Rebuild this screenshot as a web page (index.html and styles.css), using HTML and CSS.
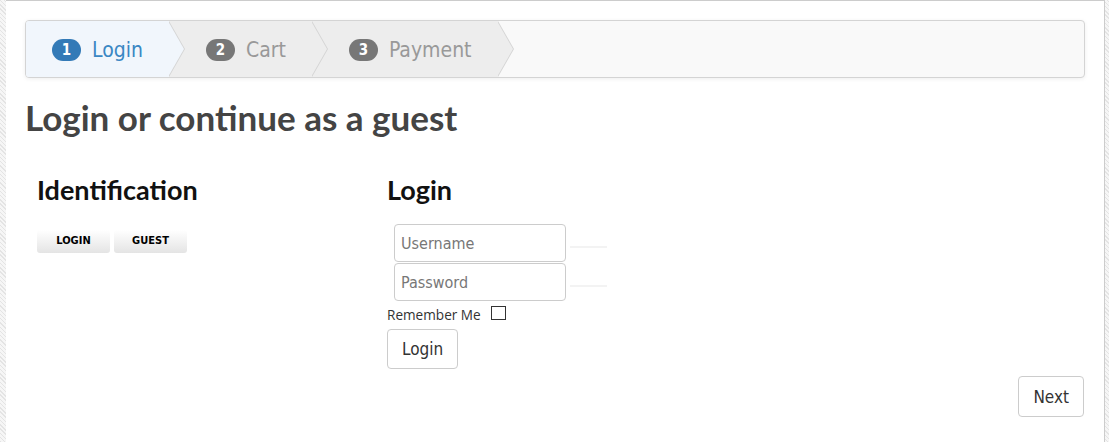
FILE: index.html
```html
<!DOCTYPE html>
<html lang="en">
<head>
    <meta charset="UTF-8">
    <meta name="viewport" content="width=device-width, initial-scale=1.0">
    <title>Checkout</title>
    <link rel="stylesheet" href="styles.css">
</head>
<body>
    <div class="page">
        <div class="wizard">
            <ul class="steps">
                <li class="step active"><span class="badge">1</span>Login<span class="chevron"></span></li>
                <li class="step"><span class="badge">2</span>Cart<span class="chevron"></span></li>
                <li class="step"><span class="badge">3</span>Payment<span class="chevron"></span></li>
            </ul>
        </div>

        <h1 class="title">Login or continue as a guest</h1>

        <div class="row">
            <div class="col col-ident">
                <h2>Identification</h2>
                <div class="choice">
                    <button type="button" class="choice-btn">LOGIN</button>
                    <button type="button" class="choice-btn">GUEST</button>
                </div>
            </div>
            <div class="col col-login">
                <h2>Login</h2>
                <form class="login-form">
                    <div class="field">
                        <input type="text" id="username" placeholder="Username">
                        <span class="hint-line"></span>
                    </div>
                    <div class="field">
                        <input type="password" id="password" placeholder="Password">
                        <span class="hint-line"></span>
                    </div>
                    <label class="remember" for="remember">Remember Me <input type="checkbox" id="remember"></label>
                    <button type="button" class="btn btn-login">Login</button>
                </form>
            </div>
        </div>

        <div class="actions">
            <button type="button" class="btn btn-next">Next</button>
        </div>
    </div>
</body>
</html>
```

FILE: styles.css
```css
body {
    margin: 0;
    background: repeating-linear-gradient(45deg, #e4e4e4 0 1px, #f6f6f6 1px 3px);
    font-family: "DejaVu Sans Condensed", "DejaVu Sans", sans-serif;
    color: #333;
}
.page {
    margin: 0 4px 0 6px;
    min-height: 100vh;
    box-sizing: border-box;
    background-color: #fff;
    border-top: 1px solid #ccc;
    border-right: 1px solid #ccc;
    padding: 19px 19px 20px 19px;
}

/* wizard bar */
.wizard {
    border: 1px solid #d4d4d4;
    border-radius: 4px;
    background-color: #f9f9f9;
    box-shadow: 0 1px 4px rgba(0, 0, 0, 0.065);
    overflow: hidden;
}
.steps {
    list-style: none;
    margin: 0;
    padding: 0;
    height: 56px;
    display: flex;
}
.step {
    position: relative;
    display: flex;
    align-items: center;
    padding: 1px 26px 0 37px;
    background-color: #ededed;
    color: #999;
    font-size: 21px;
}
.step.active {
    padding-left: 26px;
    background-color: #f1f6fc;
    color: #3a87c3;
}
.badge {
    display: inline-flex;
    align-items: center;
    justify-content: center;
    width: 29px;
    height: 22px;
    margin-right: 11px;
    border-radius: 11px;
    background-color: #777;
    color: #fff;
    font-size: 15px;
    font-weight: bold;
}
.step.active .badge {
    background-color: #337ab7;
}
.chevron {
    position: absolute;
    top: 0;
    right: -16px;
    z-index: 1;
    width: 0;
    height: 0;
    border-top: 28px solid transparent;
    border-bottom: 28px solid transparent;
    border-left: 16px solid #d4d4d4;
}
.chevron::after {
    content: "";
    position: absolute;
    top: -28px;
    left: -17px;
    border-top: 28px solid transparent;
    border-bottom: 28px solid transparent;
    border-left: 16px solid #ededed;
}
.step.active .chevron::after {
    border-left-color: #f1f6fc;
}

/* headings */
.title {
    margin: 18px 0 0 0;
    font-family: Lato, sans-serif;
    font-size: 35px;
    font-weight: bold;
    line-height: 1.2;
    color: #444;
}
.row {
    display: grid;
    grid-template-columns: 362px 1fr;
    margin-top: 36px;
}
.col h2 {
    margin: 0;
    font-family: Lato, sans-serif;
    font-size: 27px;
    font-weight: bold;
    line-height: 1.2;
    color: #111;
}
.col-ident {
    padding-left: 12px;
}

/* identification buttons */
.choice {
    display: flex;
    gap: 4px;
    margin-top: 24px;
}
.choice-btn {
    width: 73px;
    height: 23px;
    padding: 0 0 3px 0;
    border: none;
    border-radius: 3px;
    background: linear-gradient(#fff, #e4e4e4);
    font-family: "DejaVu Sans Condensed", "DejaVu Sans", sans-serif;
    font-size: 11px;
    font-weight: bold;
    color: #000;
}

/* login form */
.login-form {
    margin-top: 18px;
}
.field {
    display: flex;
    align-items: center;
    gap: 4px;
    margin-bottom: 1px;
    margin-left: 7px;
}
.field input {
    width: 172px;
    height: 38px;
    box-sizing: border-box;
    border: 1px solid #ccc;
    border-radius: 4px;
    padding: 0 6px;
    font-family: "DejaVu Sans Condensed", "DejaVu Sans", sans-serif;
    font-size: 16px;
    color: #555;
}
.field input::placeholder {
    color: #777;
}
.hint-line {
    width: 37px;
    height: 2px;
    margin-top: 8px;
    background-color: #f3f3f3;
}
.remember {
    display: flex;
    align-items: center;
    height: 20px;
    margin-top: 3px;
    font-family: "Open Sans", sans-serif;
    font-size: 13.6px;
    color: #333;
}
.remember input {
    appearance: none;
    width: 15px;
    height: 14px;
    margin: 0 0 2px 10px;
    border: 1px solid #333;
    background-color: #fff;
}
.btn {
    height: 40px;
    padding: 0 14px;
    border: 1px solid #ccc;
    border-radius: 4px;
    background-color: #fff;
    font-family: "DejaVu Sans Condensed", "DejaVu Sans", sans-serif;
    font-size: 17px;
    color: #333;
}
.btn-login {
    margin-top: 5px;
}
.actions {
    display: flex;
    justify-content: flex-end;
    margin-top: 7px;
    padding-right: 1px;
}
.btn-next {
    height: 41px;
    padding: 0 14px;
}
```
